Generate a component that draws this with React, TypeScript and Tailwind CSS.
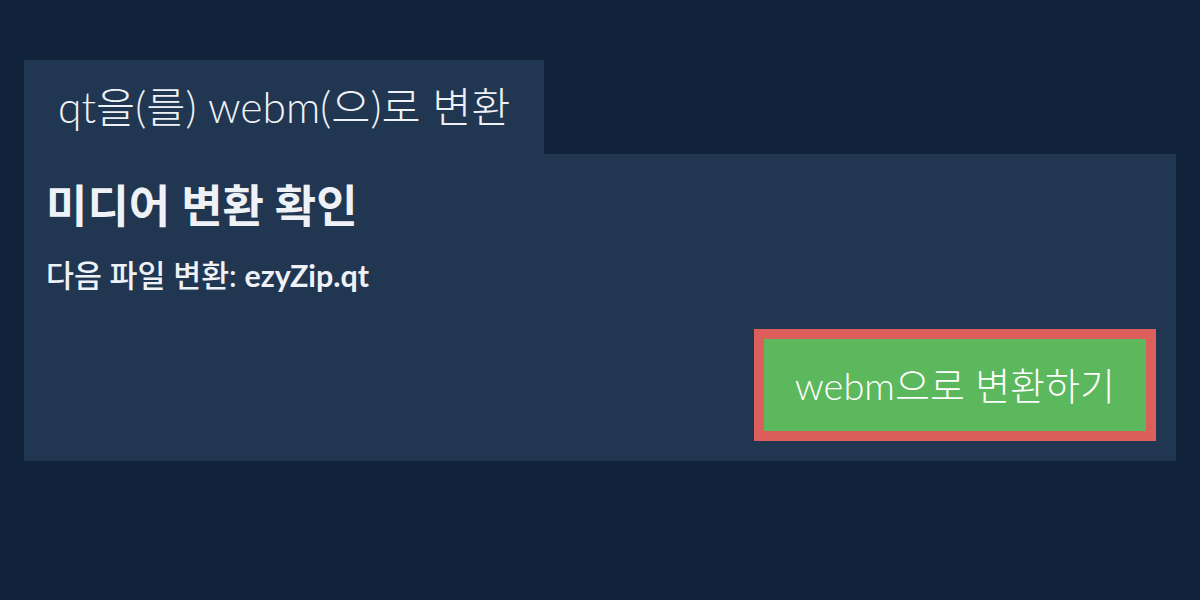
export default function App() {
  const font = { fontFamily: 'Lato, "Noto Sans CJK KR", sans-serif' };
  return (
    <div className="w-[1200px] h-[600px] bg-[#10233a] pt-[60px] px-[24px]" style={font}>
      <div className="flex">
        <div className="w-[520px] h-[94px] bg-[#213651] flex items-center pl-[34px]">
          <h1 className="text-[42.6px] font-light text-[#eef2f6] leading-none">qt을(를) webm(으)로 변환</h1>
        </div>
      </div>
      <div className="bg-[#213651] h-[307px] px-[22px] pt-[25px] flex flex-col">
        <h2 className="text-[45px] font-bold text-[#eef2f6] leading-[54px]">미디어 변환 확인</h2>
        <p className="mt-[24px] text-[30.4px] font-medium text-[#eef2f6] leading-[36px]">
          다음 파일 변환: <span className="font-bold">ezyZip.qt</span>
        </p>
        <div className="flex justify-end mt-[36px]">
          <button className="mr-[-2px] border-[10px] border-[#dc5f5b] bg-[#5cb85c] h-[112px] px-[31px] text-[38px] font-light text-white leading-none">
            webm으로 변환하기
          </button>
        </div>
      </div>
    </div>
  );
}
